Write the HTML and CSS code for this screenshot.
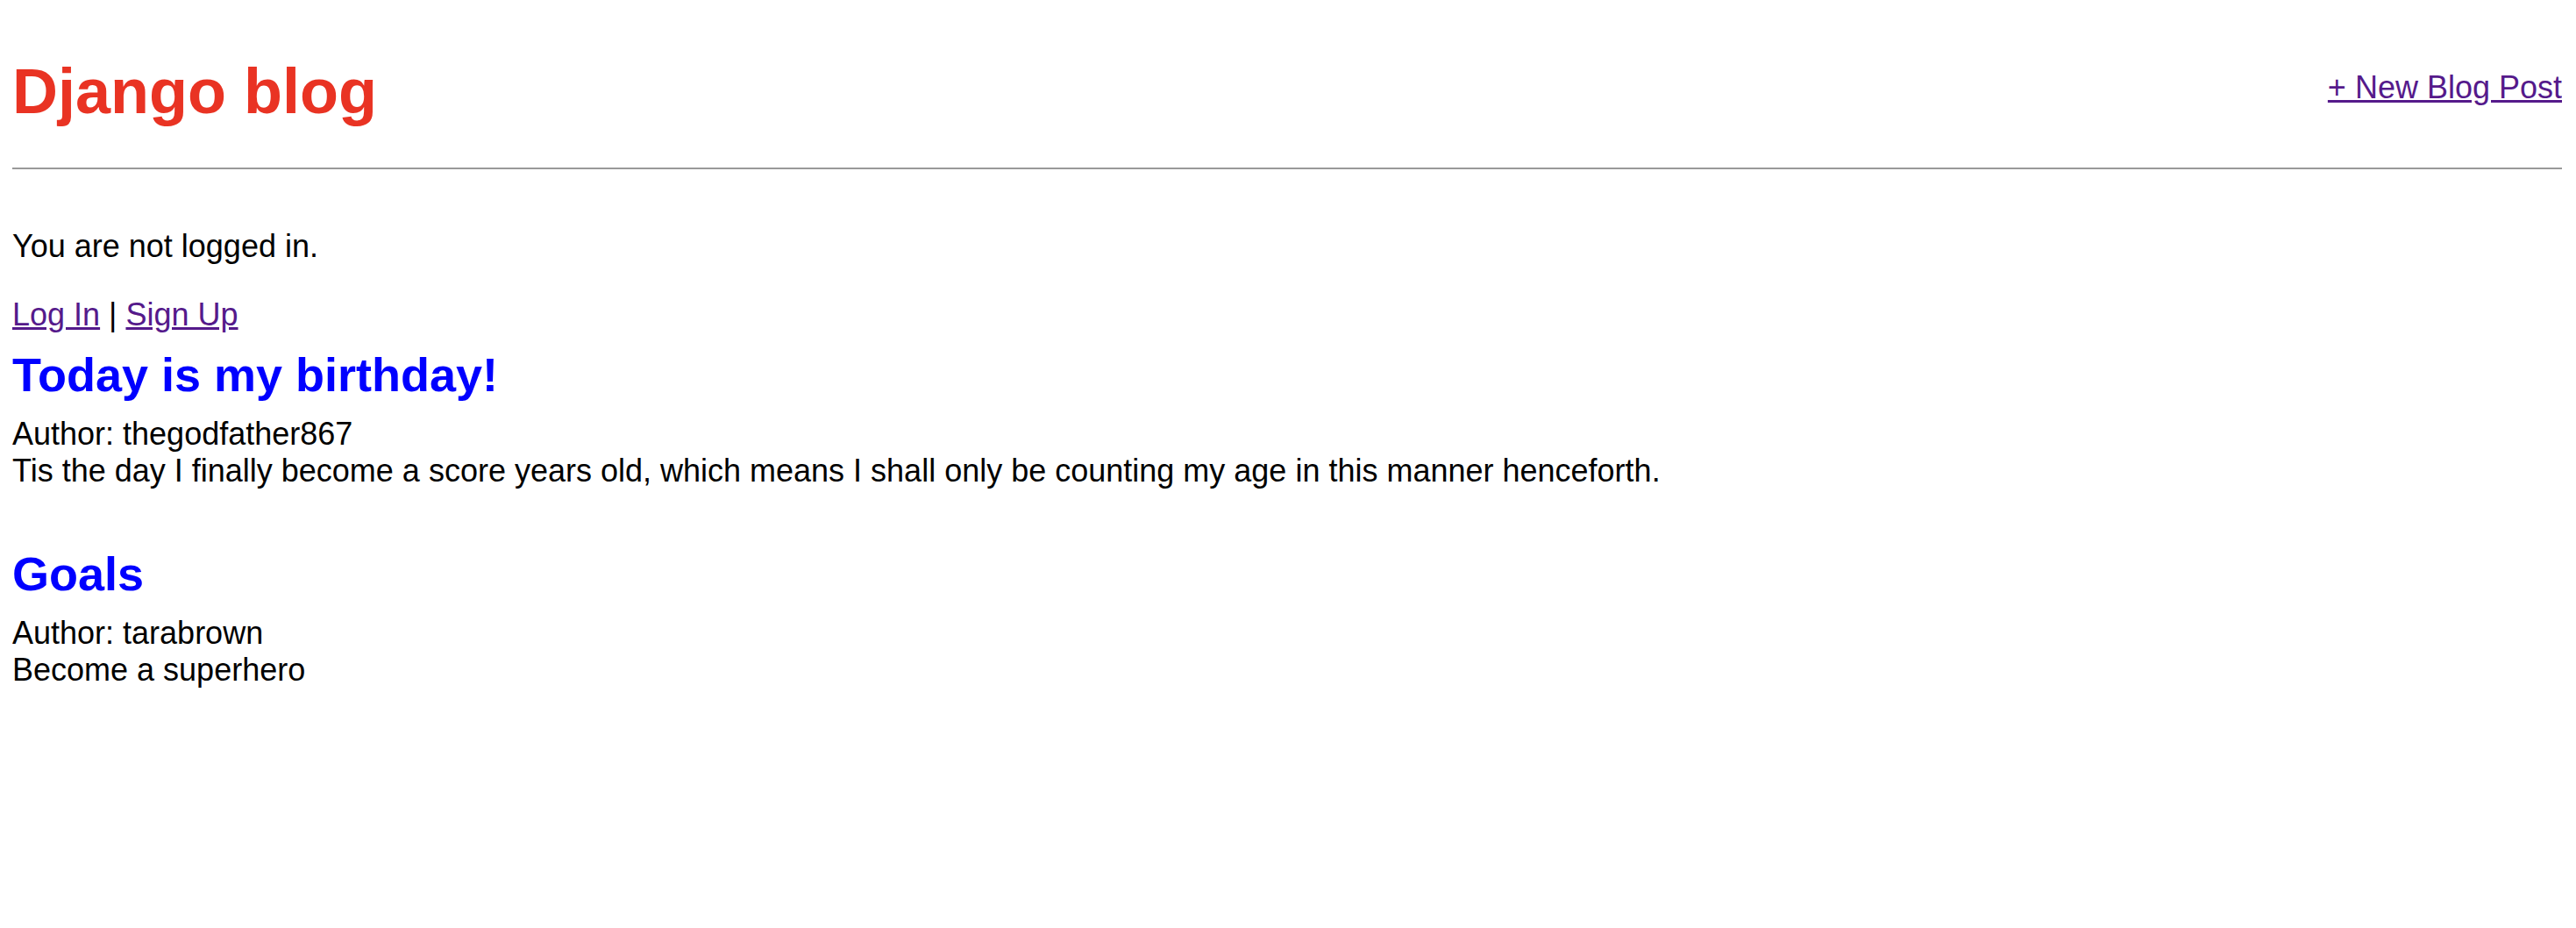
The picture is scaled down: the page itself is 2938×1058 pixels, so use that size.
FILE: index.html
```html
<!DOCTYPE html>
<html lang="en">
<head>
<meta charset="utf-8">
<title>Django blog</title>
<link rel="stylesheet" href="styles.css">
</head>
<body>
<header class="site-header">
  <h1 class="site-title">Django blog</h1>
  <a class="new-post" href="#">+ New Blog Post</a>
</header>
<hr class="divider">
<p class="status">You are not logged in.</p>
<p class="auth"><a href="#">Log In</a> | <a href="#">Sign Up</a></p>
<div class="post">
  <h2 class="post-title">Today is my birthday!</h2>
  <p class="post-meta">Author: thegodfather867</p>
  <p class="post-body">Tis the day I finally become a score years old, which means I shall only be counting my age in this manner henceforth.</p>
</div>
<div class="post">
  <h2 class="post-title">Goals</h2>
  <p class="post-meta">Author: tarabrown</p>
  <p class="post-body">Become a superhero</p>
</div>
</body>
</html>
```

FILE: styles.css
```css
html, body {
  background: #ffffff;
}
body {
  margin: 14px 16px 0 14px;
  font-family: "Liberation Sans", Arial, Helvetica, sans-serif;
  font-size: 36px;
  color: #000000;
}
a {
  color: #551a8b;
  text-decoration: underline;
}
.site-header {
  display: flex;
  justify-content: space-between;
  align-items: center;
}
.site-title {
  font-size: 72px;
  font-weight: bold;
  color: #e93323;
  margin: 49px 0 46px 0;
}
.new-post {
  margin-top: 2px;
  margin-bottom: 8px;
}
.divider {
  border: 0;
  border-top: 2px solid #999999;
  margin: 0;
  height: 0;
}
.status {
  margin: 67px 0 36px 0;
}
.auth {
  margin: 0;
}
.post {
  padding-bottom: 49px;
}
.post-title {
  font-size: 54px;
  font-weight: bold;
  color: #0000ff;
  margin: 16px 0 16px 0;
}
.post-meta,
.post-body {
  margin: 0;
}
```
